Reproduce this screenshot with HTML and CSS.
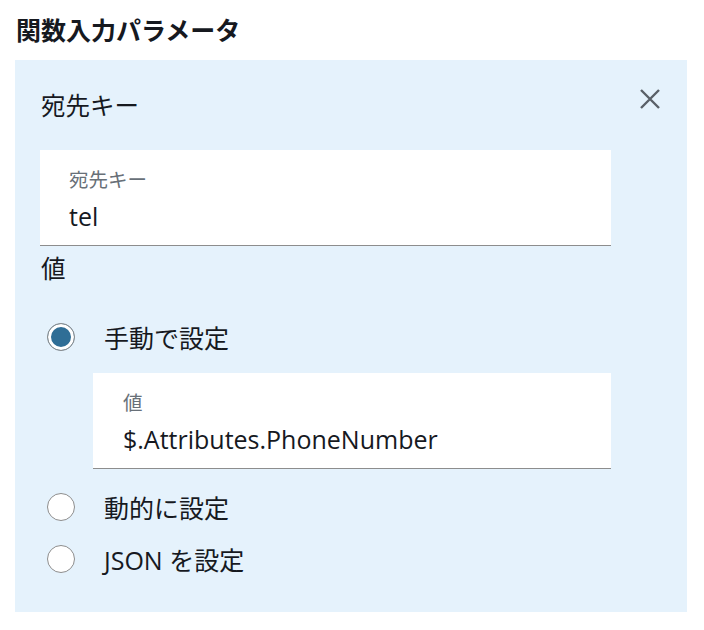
FILE: index.html
```html
<!DOCTYPE html>
<html lang="ja">

<head>
    <meta charset="UTF-8">
    <meta name="viewport" content="width=device-width, initial-scale=1.0">
    <title>関数入力パラメータ</title>
    <link rel="stylesheet" href="styles.css">
</head>

<body>
    <h2 class="section-title">関数入力パラメータ</h2>

    <div class="param-panel">
        <div class="panel-header">
            <span class="panel-title">宛先キー</span>
            <button class="close-btn" aria-label="削除">
                <svg width="22" height="22" viewBox="0 0 22 22">
                    <path d="M2 2 L20 20 M20 2 L2 20" stroke="#5a6068" stroke-width="2.4" fill="none" />
                </svg>
            </button>
        </div>

        <div class="field">
            <label class="field-label">宛先キー</label>
            <div class="field-value">tel</div>
        </div>

        <div class="value-title">値</div>

        <label class="radio-row first">
            <span class="radio checked"></span>
            <span>手動で設定</span>
        </label>

        <div class="field nested">
            <label class="field-label">値</label>
            <div class="field-value">$.Attributes.PhoneNumber</div>
        </div>

        <label class="radio-row">
            <span class="radio"></span>
            <span>動的に設定</span>
        </label>

        <label class="radio-row">
            <span class="radio"></span>
            <span>JSON を設定</span>
        </label>
    </div>
</body>

</html>
```

FILE: styles.css
```css
body {
    font-family: 'Open Sans', 'Noto Sans CJK JP', sans-serif;
    background-color: #fff;
    color: #16191f;
    margin: 0;
    width: 704px;
}

.section-title {
    font-size: 25px;
    font-weight: bold;
    line-height: 34px;
    margin: 0;
    padding: 13px 0 13px 16px;
}

.param-panel {
    margin-left: 15px;
    width: 672px;
    box-sizing: border-box;
    background-color: #e5f2fc;
    padding: 24px 76px 39px 25px;
    display: flex;
    flex-direction: column;
}

.panel-header {
    height: 44px;
    display: flex;
    align-items: center;
    justify-content: space-between;
    margin-right: -50px;
}

.panel-title {
    font-size: 24.5px;
    line-height: 32px;
    padding-left: 1px;
}

.close-btn {
    background: none;
    border: none;
    padding: 0;
    width: 22px;
    height: 22px;
    margin-top: -14px;
    cursor: pointer;
}

.field {
    margin-top: 22px;
    background-color: #fff;
    border-bottom: 1px solid #8d8d8d;
    padding: 18px 29px 13px;
    display: flex;
    flex-direction: column;
    gap: 8px;
}

.field.nested {
    margin-top: 22px;
    margin-left: 53px;
    padding-left: 30px;
}

.field-label {
    font-size: 19.5px;
    line-height: 24px;
    color: #687078;
}

.field-value {
    font-size: 25px;
    line-height: 32px;
}

.value-title {
    margin-top: 9px;
    font-size: 24.5px;
    line-height: 28px;
    padding-left: 1px;
}

.radio-row {
    display: flex;
    align-items: center;
    gap: 29px;
    height: 28px;
    margin-top: 24px;
    padding-left: 7px;
    font-size: 25px;
}

.radio-row.first {
    margin-top: 40px;
}

.radio {
    width: 28px;
    height: 28px;
    box-sizing: border-box;
    border: 1px solid #8d8d8d;
    border-radius: 50%;
    background-color: #fff;
    flex-shrink: 0;
}

.radio.checked {
    background-color: #2f6e96;
    box-shadow: inset 0 0 0 3px #fff;
}
```
